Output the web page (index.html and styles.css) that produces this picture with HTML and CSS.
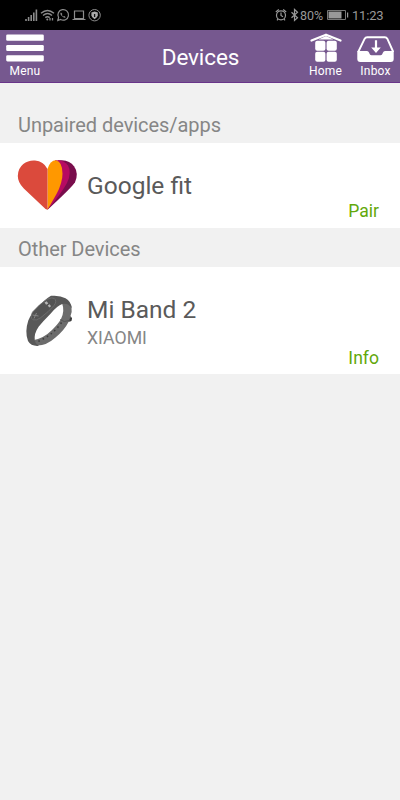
FILE: index.html
```html
<!DOCTYPE html>
<html lang="en">
<head>
<meta charset="utf-8">
<title>Devices</title>
<link rel="stylesheet" href="styles.css">
</head>
<body>
<div class="status">
  <svg class="status-left" width="78" height="14" viewBox="24 8 78 14" fill="none" stroke="#8c8c8c">
    <path d="M26 21v-2M28.600 21v-4M31.200 21v-6M33.800 21v-8.500M36.400 21V9.500" stroke-width="1.600"/>
    <path d="M41 13.200q6.500-5.500 13 0M43 15.500q4.500-3.800 9 0M45.300 17.600q2.200-1.800 4.400 0" stroke-width="1.400"/>
    <circle cx="47.300" cy="19.500" r="1" fill="#8c8c8c" stroke="none"/>
    <path d="M50 18v2.500M52.500 18v2.500" stroke-width="1.300"/>
    <path d="M57.800 20.500l.8-3a5.300 5.300 0 1 1 2 2z" stroke-width="1.200"/>
    <path d="M61 12.500q-1.500 1 .8 3.600q2.500 2.600 4 1.200l-1.500-1.400-1 .6q-1.200-.7-1.500-1.700l.6-.8z" fill="#8c8c8c" stroke="none"/>
    <path d="M74.500 11h9v7.500h-9zM72.500 19.500h13" stroke-width="1.200"/>
    <circle cx="94.600" cy="15.200" r="5.700" stroke-width="1"/>
    <path d="M94.600 11.400l3.200 1v2.800q0 2.300-3.200 4q-3.200-1.700-3.200-4v-2.800z" fill="#aaa" stroke="none"/>
    <path d="M94.600 14v3" stroke="#111" stroke-width="1.300"/>
  </svg>
  <div class="status-right">
    <svg width="25" height="14" viewBox="275 8 25 14" fill="none" stroke="#989898">
      <circle cx="281" cy="15.300" r="4.500" stroke-width="1.200"/>
      <path d="M275.800 12l3-2.500M286.200 12l-3-2.500M281 12.500v3l2 1.200M278 19l-1 1.400M284 19l1 1.400" stroke-width="1.200"/>
      <path d="M291.500 12.300l6 5.500-3 2.700V9.500l3 2.800-6 5.500" stroke-width="1.200"/>
    </svg>
    <span class="percent">80%</span>
    <svg class="battery" width="23" height="12" viewBox="327 9 23 12">
      <path d="M327.500 10.500h18v9h-18z" fill="none" stroke="#777"/>
      <path d="M328.500 11.500h13v7h-13z" fill="#999"/>
      <path d="M347 12.500h1.200v5H347z" fill="#999"/>
    </svg>
    <span class="clock">11:23</span>
  </div>
</div>
<header class="bar">
  <div class="nav menu">
    <svg width="38" height="28" viewBox="6 34 38 28" fill="#fff">
      <rect x="6.200" y="34.500" width="37.600" height="6.200" rx="1.300"/>
      <rect x="6.200" y="44.900" width="37.600" height="6.200" rx="1.300"/>
      <rect x="6.200" y="55.200" width="37.600" height="6.200" rx="1.300"/>
    </svg>
    <span>Menu</span>
  </div>
  <h1>Devices</h1>
  <div class="nav home">
    <svg width="32" height="30" viewBox="310 33 32 30" fill="#fff">
      <path d="M311.500 40.500L326 34.700l14.500 5.800" fill="none" stroke="#fff" stroke-width="2.200" stroke-linecap="round" stroke-linejoin="round"/>
      <path d="M318.500 39.500L326 36l7.500 3.500z"/>
      <rect x="315.200" y="40.700" width="10.200" height="10" rx="2"/>
      <rect x="326.600" y="40.700" width="10.200" height="10" rx="2"/>
      <rect x="315.200" y="51.700" width="10.200" height="10" rx="2"/>
      <rect x="326.600" y="51.700" width="10.200" height="10" rx="2"/>
    </svg>
    <span>Home</span>
  </div>
  <div class="nav inbox">
    <svg width="38" height="28" viewBox="357 35 38 28">
      <path d="M358.200 52l6.500-13.300q.8-1.500 2.500-1.500h17.600q1.700 0 2.500 1.500L393.300 52" fill="none" stroke="#fff" stroke-width="1.900"/>
      <path d="M357.300 51h9.700q1.500 0 2 1.500l.8 1.800q.5 1 1.700 1h9q1.200 0 1.700-1l.8-1.800q.5-1.500 2-1.500h8.700V59q0 3-3 3h-30.400q-3 0-3-3z" fill="#fff"/>
      <path d="M374.900 40.200h2.200v7.200h3.700l-4.800 5.600-4.800-5.600h3.700z" fill="#fff"/>
    </svg>
    <span>Inbox</span>
  </div>
</header>
<main>
  <h2 class="first">Unpaired devices/apps</h2>
  <section class="card fit">
    <svg class="pic" width="62" height="54" viewBox="17 158 62 54">
      <path d="M58 160.200h4q8 .5 12 6q5 7 1 16q-3 5-27.500 27.500z" fill="#790d4c"/>
      <path d="M55 160.200q9-.5 13 5.300q4 7-1 17.500q-6 11-19.500 26.700z" fill="#b70b62"/>
      <path d="M47.500 169q2.500-8.800 8.500-8.800q6.500 1.500 6.500 13.500q0 9-6 20.300q-4.500 8-9 15.700z" fill="#ff9800"/>
      <path d="M47.500 169v40.700l-2-.8-21.700-20.400q-6-6-6-12.500q0-7.500 5.500-12q5-4 11.700-3.500q8.500.5 12.500 8.500z" fill="#db4a3c"/>
    </svg>
    <div class="info"><h3>Google fit</h3></div>
    <a>Pair</a>
  </section>
  <h2>Other Devices</h2>
  <section class="card band">
    <svg class="pic" width="62" height="54" viewBox="17 294 62 54">
      <path d="M62 303q8-2 9.500 4q.8 5-1 9l1.500 2-.8 3-2.700 1q-4 8-13 15.500Q46 346 36.500 345.500L34 340q10-2 18-10q7-7 9-11q4-8 1-16z" fill="#6c6c6c"/>
      <path d="M51 295.800q9-.8 14.500 2.400q5.500 3 6.300 9.800q-4-5.500-9.500-4q-5 1.500-12 10q-7 7-11.500 12.500q-5 7-4 14q.8 3.500 4.200 5.300q-8 .7-11-4.800q-3.500-9 .3-20.500q2.500-6.500 9-12.500q7.700-9 13.700-12.200z" fill="#585858"/>
      <path d="M32.500 312q7-8 14.500-12.700q5.500-2.300 7.300-.8q3 2.500-.3 7q-5 6-13.500 12.300q-4 3-7.500 2q-3.300-2.500-.5-7.800z" fill="#535353" stroke="#777" stroke-width=".7"/>
      <path d="M44.500 302.500l2.200-1.300 1.600 2.300-2.200 1.200zM47.800 305.500l1.800-1.300 1.500 2-1.900 1.400z" fill="#b5b5b5"/>
      <path d="M32.500 315l6 1M36.500 313l-2.500 5.500" stroke="#858585"/>
      <path d="M61.500 322.500q-4.500 6.500-10 11t-14.500 8.500" fill="none" stroke="#3c3c3c" stroke-width="1.500" stroke-dasharray="1.500 3.300"/>
      <path d="M60 319.500q4 3.500 9 1l2.500-2.500" fill="none" stroke="#505050" stroke-width=".8"/>
      <path d="M70 317.500l2 .5-.7 3-2 .5z" fill="#3c3c3c"/>
    </svg>
    <div class="info"><h3>Mi Band 2</h3><p>XIAOMI</p></div>
    <a>Info</a>
  </section>
</main>
</body>
</html>
```
FILE: styles.css
```css
* { box-sizing: border-box; }
body { margin: 0; min-height: 800px; background: #f1f1f1; font-family: Roboto, sans-serif; color: #5a5a5a; }
h1, h2, h3, p { margin: 0; font-weight: 400; }
svg { display: block; flex: none; }
.status { height: 30px; background: #000; display: flex; justify-content: space-between; padding: 0 16px 0 24px; color: #989898; }
.status-left { margin-top: 8px; }
.status-right { display: flex; align-items: center; height: 30px; font-size: 12.500px; }
.percent { width: 27px; line-height: 31px; white-space: nowrap; }
.battery { margin-right: 2px; }
.clock { width: 32px; font-size: 13px; line-height: 31px; letter-spacing: -.2px; }
.bar { height: 53px; background: #76588f; border-bottom: 1px solid #69358a; display: grid; grid-template-columns: 50px 1fr 51px 49px; }
.bar h1 { padding-left: 51px; color: #fff; text-align: center; font-size: 22.500px; line-height: 55px; letter-spacing: -.1px; }
.nav { display: flex; flex-direction: column; align-items: center; color: #fff; font-size: 12px; line-height: 14px; letter-spacing: .2px; }
.nav svg { margin-bottom: auto; }
.nav span { margin-bottom: 7px; }
.menu svg { margin-top: 4px; }
.home svg { margin-top: 3px; }
.inbox svg { margin-top: 5px; }
h2 { height: 39px; padding-left: 18px; line-height: 42px; font-size: 20px; color: #868686; letter-spacing: -.05px; }
h2.first { height: 60px; padding-top: 21px; }
.card { background: #fff; display: grid; grid-template-columns: 70px 1fr auto; padding: 0 21px 0 17px; }
.fit { height: 85px; }
.band { height: 107px; }
.pic { margin-top: 15px; }
.band .pic { margin-top: 27px; }
h3 { font-size: 24.500px; line-height: 30px; }
.info { padding-top: 28px; }
.info p { font-size: 17.700px; line-height: 26px; color: #868686; }
.card a { align-self: end; color: #62a80a; font-size: 17.600px; line-height: 22px; margin-bottom: 6px; }
.band a { margin-bottom: 5px; }
```
